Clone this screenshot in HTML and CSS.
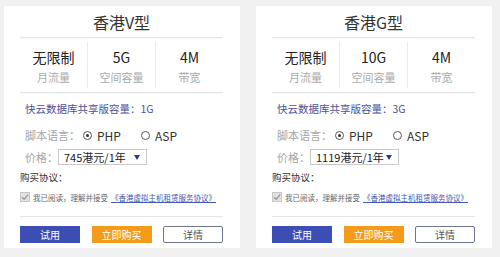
FILE: index.html
```html
<!DOCTYPE html>
<html lang="zh-CN">

<head>
    <meta charset="UTF-8">
    <title>香港虚拟主机</title>
    <link rel="stylesheet" href="styles.css">
</head>

<body>
    <div class="plans">
        <!-- 香港V型 -->
        <div class="plan-card">
            <h3 class="plan-title">香港V型</h3>
            <div class="plan-stats">
                <div class="stat">
                    <div class="stat-value">无限制</div>
                    <div class="stat-label">月流量</div>
                </div>
                <div class="stat">
                    <div class="stat-value">5G</div>
                    <div class="stat-label">空间容量</div>
                </div>
                <div class="stat">
                    <div class="stat-value">4M</div>
                    <div class="stat-label">带宽</div>
                </div>
            </div>
            <div class="db-size">快云数据库共享版容量：1G</div>
            <div class="field lang">
                <span class="field-name">脚本语言：</span>
                <span class="radio checked"></span><span class="radio-text">PHP</span>
                <span class="radio"></span><span class="radio-text">ASP</span>
            </div>
            <div class="field price">
                <span class="field-name">价格：</span>
                <div class="select">
                    <span>745港元/1年</span>
                    <span class="caret"></span>
                </div>
            </div>
            <div class="agree-title">购买协议：</div>
            <div class="agree">
                <svg class="checkbox" width="10" height="10" viewBox="0 0 10 10">
                    <rect x="0.5" y="0.5" width="9" height="9" fill="#e2e2e2" stroke="#c8c8c8" />
                    <path d="M2 5.2 L4.2 7.3 L8.2 2.6" fill="none" stroke="#9a9a9a" stroke-width="1.4" />
                </svg>
                <span>我已阅读，理解并接受</span>
                <a href="#">《香港虚拟主机租赁服务协议》</a>
            </div>
            <div class="actions">
                <a class="btn btn-try" href="#">试用</a>
                <a class="btn btn-buy" href="#">立即购买</a>
                <a class="btn btn-detail" href="#">详情</a>
            </div>
        </div>

        <!-- 香港G型 -->
        <div class="plan-card">
            <h3 class="plan-title">香港G型</h3>
            <div class="plan-stats">
                <div class="stat">
                    <div class="stat-value">无限制</div>
                    <div class="stat-label">月流量</div>
                </div>
                <div class="stat">
                    <div class="stat-value">10G</div>
                    <div class="stat-label">空间容量</div>
                </div>
                <div class="stat">
                    <div class="stat-value">4M</div>
                    <div class="stat-label">带宽</div>
                </div>
            </div>
            <div class="db-size">快云数据库共享版容量：3G</div>
            <div class="field lang">
                <span class="field-name">脚本语言：</span>
                <span class="radio checked"></span><span class="radio-text">PHP</span>
                <span class="radio"></span><span class="radio-text">ASP</span>
            </div>
            <div class="field price">
                <span class="field-name">价格：</span>
                <div class="select">
                    <span>1119港元/1年</span>
                    <span class="caret"></span>
                </div>
            </div>
            <div class="agree-title">购买协议：</div>
            <div class="agree">
                <svg class="checkbox" width="10" height="10" viewBox="0 0 10 10">
                    <rect x="0.5" y="0.5" width="9" height="9" fill="#e2e2e2" stroke="#c8c8c8" />
                    <path d="M2 5.2 L4.2 7.3 L8.2 2.6" fill="none" stroke="#9a9a9a" stroke-width="1.4" />
                </svg>
                <span>我已阅读，理解并接受</span>
                <a href="#">《香港虚拟主机租赁服务协议》</a>
            </div>
            <div class="actions">
                <a class="btn btn-try" href="#">试用</a>
                <a class="btn btn-buy" href="#">立即购买</a>
                <a class="btn btn-detail" href="#">详情</a>
            </div>
        </div>
    </div>
</body>

</html>
```

FILE: styles.css
```css
/* Shared Styles */
* {
    margin: 0;
    padding: 0;
    box-sizing: border-box;
}

body {
    font-family: "Noto Sans CJK SC", "Noto Sans", sans-serif;
    background-color: #f1f1f1;
    color: #333333;
    font-size: 12px;
}

a {
    text-decoration: none;
}

.plans {
    display: flex;
    gap: 16px;
    padding: 6px 4px;
}

/* Plan card */
.plan-card {
    width: 236px;
    height: 242px;
    background: #ffffff;
    padding: 0 17px 5px 16px;
}

.plan-title {
    height: 32px;
    line-height: 32px;
    text-align: center;
    font-size: 16px;
    font-weight: normal;
    color: #333333;
    border-bottom: 1px solid #e6e6e6;
    box-shadow: 0 1px 0 #f6f6f6;
}

.plan-stats {
    display: flex;
    height: 55px;
    padding: 4px 0;
    border-bottom: 1px solid #e6e6e6;
    box-shadow: 0 1px 0 #f6f6f6;
}

.stat {
    flex: 1;
    text-align: center;
    padding-top: 5px;
    border-left: 1px solid #ececec;
}

.stat:first-child {
    border-left: none;
}

.stat-value {
    font-size: 14px;
    line-height: 20px;
    color: #222222;
}

.stat-label {
    margin-top: 3px;
    font-size: 11px;
    line-height: 15px;
    color: #ababab;
}

.db-size {
    margin-top: 6px;
    padding-left: 5px;
    font-size: 10.5px;
    line-height: 20px;
    color: #4b4f9c;
}

/* Form fields */
.field {
    display: flex;
    align-items: center;
    padding-left: 5px;
    font-size: 11px;
}

.field-name {
    color: #a5a5a5;
}

.lang {
    margin-top: 6px;
    height: 20px;
}

.radio {
    width: 9px;
    height: 9px;
    border: 1px solid #555555;
    border-radius: 50%;
    margin: 0 5px 0 3px;
    position: relative;
}

.radio.checked::after {
    content: '';
    position: absolute;
    width: 3px;
    height: 3px;
    left: 2px;
    top: 2px;
    border-radius: 50%;
    background: #333333;
}

.radio-text {
    color: #333333;
    font-size: 12px;
    margin-right: 17px;
}

.price {
    margin-top: 4px;
}

.select {
    display: flex;
    align-items: center;
    justify-content: space-between;
    width: 89px;
    height: 16px;
    padding: 0 6px 0 5px;
    border: 1px solid #c9c9c9;
    color: #222222;
    font-size: 11px;
    line-height: 14px;
    white-space: nowrap;
}

.caret {
    flex-shrink: 0;
    width: 0;
    height: 0;
    border-left: 3px solid transparent;
    border-right: 3px solid transparent;
    border-top: 5px solid #2d3a8c;
}

.agree-title {
    margin-top: 4px;
    font-size: 9.5px;
    line-height: 16px;
    color: #333333;
}

.agree {
    display: flex;
    align-items: center;
    margin-top: 4px;
    height: 16px;
    font-size: 7.5px;
    color: #666666;
    white-space: nowrap;
}

.checkbox {
    margin-right: 3px;
}

.agree a {
    margin-left: 3px;
    color: #4258b0;
    text-decoration: underline;
}

/* Buttons */
.actions {
    display: flex;
    justify-content: space-between;
    margin-top: 11px;
    padding-top: 9px;
    border-top: 1px solid #e6e6e6;
}

.btn {
    width: 60px;
    height: 17px;
    line-height: 17px;
    text-align: center;
    font-size: 10px;
    color: #ffffff;
}

.btn-try {
    background: #3c4db3;
}

.btn-buy {
    background: #f49b1b;
}

.btn-detail {
    background: #ffffff;
    color: #555555;
    border: 1px solid #6e7595;
    line-height: 15px;
    border-radius: 2px;
}
```
